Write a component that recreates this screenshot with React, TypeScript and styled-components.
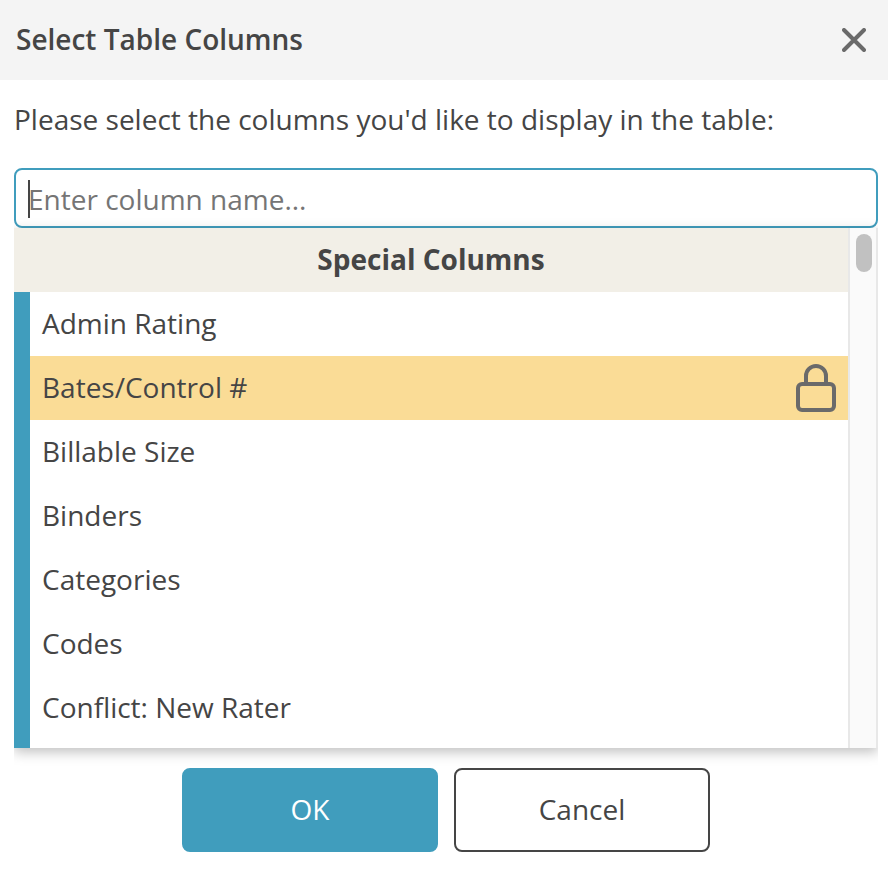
import React, { useState } from "react";
import styled, { createGlobalStyle } from "styled-components";

const color = {
  text: "#454545",
  icon: "#6a6a6a",
  placeholder: "#757575",
  accent: "#409dbd",
  header: "#f4f4f4",
  group: "#f2efe7",
  highlight: "#fadc96",
};

const GlobalStyle = createGlobalStyle`
  *, *::before, *::after { box-sizing: border-box; }
  body {
    margin: 0;
    background: #fff;
    color: ${color.text};
    font-family: "Open Sans", "Noto Sans", sans-serif;
    font-size: 28px;
    line-height: 38px;
  }
  button, input { font: inherit; color: inherit; }
`;

const Dialog = styled.section`
  display: flex;
  flex-direction: column;
`;

const Header = styled.header`
  display: flex;
  align-items: flex-start;
  justify-content: space-between;
  padding: 20px 16px 22px;
  background: ${color.header};
`;

const Title = styled.h1`
  margin: 0;
  font-size: 28px;
  font-weight: 600;
`;

const CloseButton = styled.button`
  display: flex;
  align-items: center;
  justify-content: center;
  width: 36px;
  height: 40px;
  margin-bottom: -2px;
  padding: 0;
  border: 0;
  background: none;
  color: ${color.icon};
  cursor: pointer;
`;

const Body = styled.div`
  display: flex;
  flex-direction: column;
  padding: 20px 10px 20px 14px;
`;

const Prompt = styled.label`
  margin-bottom: 30px;
`;

const Field = styled.div`
  position: relative;
  display: flex;
`;

const SearchInput = styled.input`
  flex: 1;
  min-width: 0;
  height: 60px;
  padding: 2px 12px 0;
  border: 2px solid ${color.accent};
  border-radius: 8px;
  background: #fff;
  outline: none;

  &::placeholder { color: ${color.placeholder}; opacity: 1; }
`;

const Caret = styled.span`
  position: absolute;
  top: 12px;
  left: 14px;
  width: 2px;
  height: 38px;
  background: ${color.text};
  pointer-events: none;
`;

const Dropdown = styled.div`
  position: relative;
  display: flex;
  background: #fff;
  box-shadow: 0 4px 12px rgba(0, 0, 0, 0.25);
  clip-path: inset(-12px 0 -20px 0);
`;

const Group = styled.div`
  flex: 1;
  min-width: 0;
`;

const GroupTitle = styled.h2`
  margin: 0;
  padding: 12px 12px 14px;
  background: ${color.group};
  font-size: 28px;
  font-weight: 700;
  text-align: center;
`;

const Options = styled.ul`
  margin: 0;
  padding: 0 0 8px;
  border-left: 16px solid ${color.accent};
  list-style: none;
`;

const Option = styled.li<{ $locked?: boolean }>`
  display: flex;
  align-items: flex-start;
  justify-content: space-between;
  height: 64px;
  padding: 8px 12px;
  background: ${(p) => (p.$locked ? color.highlight : "#fff")};
  line-height: 46px;
`;

const Track = styled.div`
  width: 30px;
  padding: 6px;
  border: solid #e8e8e8;
  border-width: 0 2px;
  background: #fafafa;
`;

const Thumb = styled.div`
  width: 16px;
  height: 38px;
  border-radius: 8px;
  background: #c1c1c1;
`;

const Actions = styled.footer`
  display: flex;
  justify-content: center;
  gap: 16px;
  padding: 0 10px 16px 14px;
`;

const ActionButton = styled.button<{ $primary?: boolean }>`
  width: 256px;
  height: 84px;
  padding: 0 0 2px;
  border: 2px solid ${(p) => (p.$primary ? color.accent : color.text)};
  border-radius: 8px;
  background: ${(p) => (p.$primary ? color.accent : "#fff")};
  color: ${(p) => (p.$primary ? "#fff" : color.text)};
  cursor: pointer;
`;

const CloseIcon = () => (
  <svg width="24" height="24" viewBox="0 0 24 24" fill="none" stroke="currentColor" strokeWidth="4" strokeLinecap="round" aria-hidden="true">
    <path d="M2 2 22 22M22 2 2 22" />
  </svg>
);

const LockIcon = () => (
  <svg width="40" height="48" viewBox="0 0 40 48" fill="none" stroke={color.icon} strokeWidth="4" role="img" aria-label="Locked">
    <rect x="2" y="20" width="36" height="26" rx="4" />
    <path d="M10 20v-8a10 10 0 0 1 20 0v8" />
  </svg>
);

const columns = [
  { name: "Admin Rating" },
  { name: "Bates/Control #", locked: true },
  { name: "Billable Size" },
  { name: "Binders" },
  { name: "Categories" },
  { name: "Codes" },
  { name: "Conflict: New Rater" },
];

export default function App() {
  const [query, setQuery] = useState("");

  return (
    <>
      <GlobalStyle />
      <Dialog role="dialog" aria-labelledby="dialog-title">
        <Header>
          <Title id="dialog-title">Select Table Columns</Title>
          <CloseButton type="button" aria-label="Close">
            <CloseIcon />
          </CloseButton>
        </Header>
        <Body>
          <Prompt htmlFor="column-name">
            Please select the columns you'd like to display in the table:
          </Prompt>
          <Field>
            <SearchInput
              id="column-name"
              type="text"
              placeholder="Enter column name..."
              autoComplete="off"
              value={query}
              onChange={(e) => setQuery(e.target.value)}
            />
            {query === "" && <Caret />}
          </Field>
          <Dropdown>
            <Group>
              <GroupTitle id="group-title">Special Columns</GroupTitle>
              <Options aria-labelledby="group-title">
                {columns.map((c) => (
                  <Option key={c.name} $locked={c.locked}>
                    {c.name}
                    {c.locked && <LockIcon />}
                  </Option>
                ))}
              </Options>
            </Group>
            <Track>
              <Thumb />
            </Track>
          </Dropdown>
        </Body>
        <Actions>
          <ActionButton type="button" $primary>OK</ActionButton>
          <ActionButton type="button">Cancel</ActionButton>
        </Actions>
      </Dialog>
    </>
  );
}
